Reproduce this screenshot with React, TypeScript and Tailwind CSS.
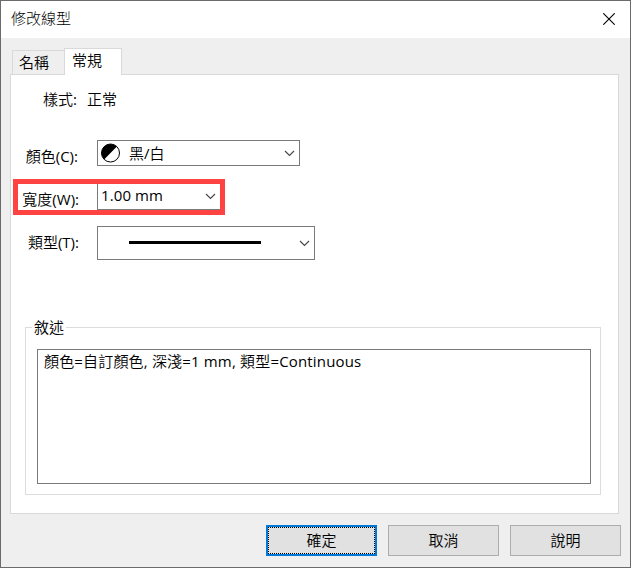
import React, { useState } from "react";

const tabs = [
  { id: "name", label: "名稱" },
  { id: "general", label: "常規" },
];

const description = "顏色=自訂顏色, 深淺=1 mm, 類型=Continuous";

// Latin runs get a slightly heavier weight than the Chinese ones
function MixedText({ text }: { text: string }) {
  return (
    <>
      {text.split(/([\x20-\x7e]+)/).map((part, i) =>
        i % 2 === 1 ? (
          <span key={i} className="font-normal">
            {part}
          </span>
        ) : (
          part
        )
      )}
    </>
  );
}

function ChevronDown() {
  return (
    <svg width="11" height="7" viewBox="0 0 11 7" fill="none" className="shrink-0">
      <path d="M1 1 L5.5 5.5 L10 1" stroke="#444444" strokeWidth="1.1" />
    </svg>
  );
}

function HalfCircle() {
  return (
    <svg width="20" height="20" viewBox="0 0 20 20" className="shrink-0">
      <circle cx="9.5" cy="10" r="9" fill="#ffffff" />
      <path d="M3.1 16.4 A9 9 0 0 1 15.9 3.6 Z" fill="#000000" />
      <circle cx="9.5" cy="10" r="9" fill="none" stroke="#000000" strokeWidth="1" />
    </svg>
  );
}

export default function App() {
  const [activeTab, setActiveTab] = useState("general");

  return (
    <div className="flex h-[568px] w-[631px] flex-col overflow-hidden border border-[#6b6b6b] bg-[#efefef] font-['Open_Sans','Noto_Sans_CJK_TC',sans-serif] text-[15px] leading-5 font-[350] text-black">
      <header className="flex h-[37px] shrink-0 items-center justify-between bg-white pr-[15px] pl-[10px]">
        <h1 className="pb-[3px] font-light">修改線型</h1>
        <button type="button" aria-label="關閉">
          <svg width="12" height="12" viewBox="0 0 12 12" className="mb-px block">
            <path d="M0.3 0.3 L11.7 11.7 M11.7 0.3 L0.3 11.7" stroke="#000000" strokeWidth="1.1" />
          </svg>
        </button>
      </header>

      <nav className="flex h-9 shrink-0 items-end pl-[11px]">
        {tabs.map((tab) => (
          <button
            key={tab.id}
            type="button"
            onClick={() => setActiveTab(tab.id)}
            className={
              tab.id === activeTab
                ? "relative z-10 -mb-px h-[27px] w-[58px] border border-b-0 border-[#d9d9d9] bg-white pr-[12px] pb-[4px] text-center"
                : "h-6 w-[52px] border border-r-0 border-b-0 border-[#d9d9d9] bg-[#efefef] pb-px pl-[6px] text-left"
            }
          >
            {tab.label}
          </button>
        ))}
      </nav>

      <main className="ml-[9px] h-[440px] w-[609px] shrink-0 border border-[#d9d9d9] bg-white">
        <div className="flex gap-[10px] pt-[14px] pl-[32px]">
          <span>
            <MixedText text="樣式:" />
          </span>
          <span>正常</span>
        </div>

        <div className="mt-[31px] flex h-[26px]">
          <span className="w-[67px] shrink-0 pt-[6px] text-right">
            <MixedText text="顏色(C):" />
          </span>
          <div className="ml-[19px] flex w-[203px] items-center border border-[#7a7a7a] pr-1 pl-[3px]">
            <HalfCircle />
            <span className="ml-[8px] grow">
              <MixedText text="黑/白" />
            </span>
            <ChevronDown />
          </div>
        </div>

        <div className="mt-[13px] ml-[2px] flex h-9 w-[212px] border-[5px] border-[#ff4343]">
          <span className="w-[61px] shrink-0 pt-[5px] text-right">
            <MixedText text="寬度(W):" />
          </span>
          <div className="ml-[18px] flex grow items-center justify-between border-b border-l border-[#7a7a7a] pr-1 pl-[3px]">
            <span className="pb-[3px] font-normal tracking-[0.1px]">1.00 mm</span>
            <ChevronDown />
          </div>
        </div>

        <div className="mt-[11px] flex h-[34px]">
          <span className="w-[68px] shrink-0 pt-[6px] text-right">
            <MixedText text="類型(T):" />
          </span>
          <div className="ml-[18px] flex w-[218px] items-center justify-between border border-[#7a7a7a] pr-1 pl-[31px]">
            <div className="mb-px h-[3px] w-[132px] bg-black" />
            <ChevronDown />
          </div>
        </div>

        <fieldset className="mt-[57px] ml-[14px] h-[178px] w-[576px] border border-[#dcdcdc] pr-[9px] pl-[11px]">
          <legend className="-ml-[5px] px-[2px]">敘述</legend>
          <div className="mt-[12px] h-[135px] w-[554px] border border-[#7a7a7a] px-[6px] py-px tracking-[0.17px]">
            <MixedText text={description} />
          </div>
        </fieldset>
      </main>

      <footer className="mt-[11px] flex justify-end gap-[11px] pr-[9px]">
        <button type="button" className="h-[31px] w-[111px] border-2 border-[#0078d7] bg-[#e1e1e1]">
          <span className="flex h-full items-center justify-center border border-dotted border-black pb-[2px]">
            確定
          </span>
        </button>
        <button type="button" className="h-[31px] w-[111px] border border-[#adadad] bg-[#e1e1e1] pb-[2px]">
          取消
        </button>
        <button type="button" className="h-[31px] w-[111px] border border-[#adadad] bg-[#e1e1e1] pb-[2px]">
          說明
        </button>
      </footer>
    </div>
  );
}
